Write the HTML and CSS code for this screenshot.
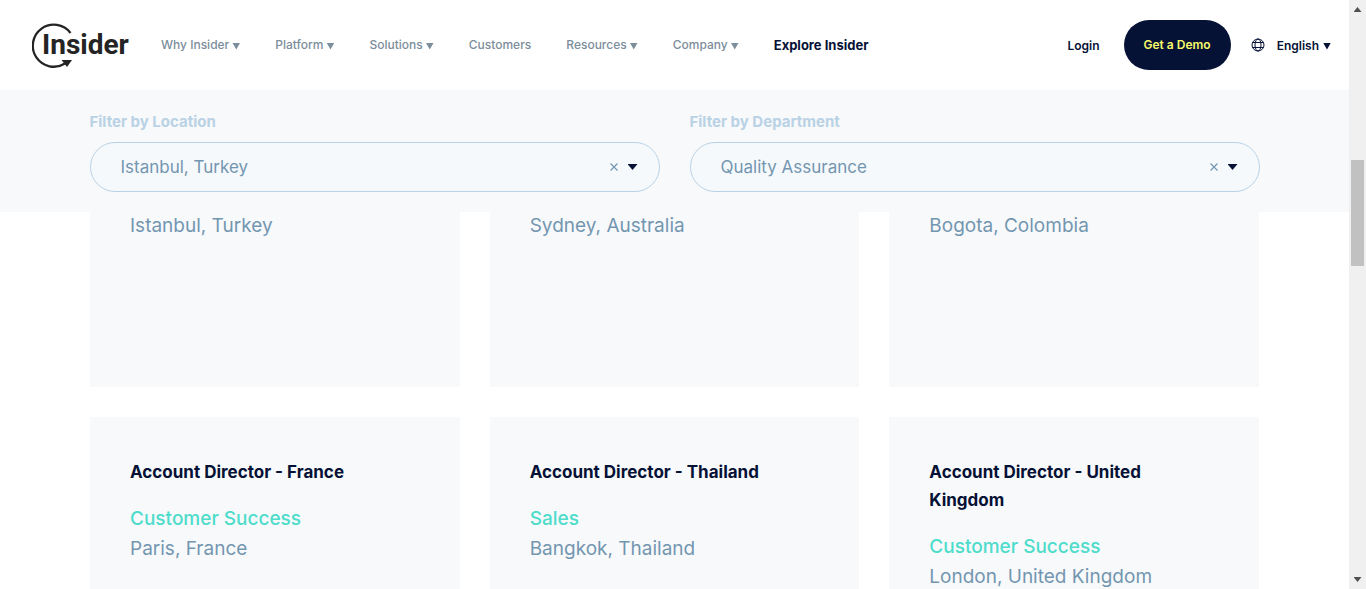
FILE: index.html
```html
<!DOCTYPE html>
<html lang="en">
<head>
<meta charset="utf-8">
<title>Insider - Open Positions</title>
<link rel="stylesheet" href="styles.css">
</head>
<body>
<div class="page">
  <header class="header">
    <a class="logo" href="#" aria-label="Insider home">
      <svg class="logo-mark" viewBox="0 0 100 46" aria-hidden="true">
        <path d="M38.500 11A21 21 0 1 0 33 41.500" fill="none" stroke="#242424" stroke-width="2.300"/>
        <path d="M29.500 38h10.500l-5 7z" fill="#242424"/>
      </svg>
      <span class="logo-text">Insider</span>
    </a>
    <nav class="nav">
      <a class="nav-link" href="#">Why Insider<i class="caret"></i></a>
      <a class="nav-link" href="#">Platform<i class="caret"></i></a>
      <a class="nav-link" href="#">Solutions<i class="caret"></i></a>
      <a class="nav-link" href="#">Customers</a>
      <a class="nav-link" href="#">Resources<i class="caret"></i></a>
      <a class="nav-link" href="#">Company<i class="caret"></i></a>
      <a class="nav-link strong" href="#">Explore Insider</a>
    </nav>
    <div class="actions">
      <a class="login" href="#">Login</a>
      <a class="demo" href="#">Get a Demo</a>
      <a class="language" href="#">
        <svg class="globe" viewBox="0 0 14 14" fill="none" stroke="#051135" aria-hidden="true"><circle cx="7" cy="7" r="6"/><ellipse cx="7" cy="7" rx="3" ry="6"/><path d="M1.500 4.500h11M1.500 9.500h11"/></svg>
        English<i class="caret"></i>
      </a>
    </div>
  </header>
  <section class="filters">
    <div class="container filter-grid">
      <div class="filter">
        <label for="location">Filter by Location</label>
        <div class="field">
          <select id="location"><option>Istanbul, Turkey</option></select>
          <button class="clear" type="button" aria-label="Clear location"><svg viewBox="0 0 8 8"><path d="M.5.5l7 7M7.500.5l-7 7" stroke="#7396b0" stroke-width="1.200"/></svg></button>
          <i class="drop"></i>
        </div>
      </div>
      <div class="filter">
        <label for="department">Filter by Department</label>
        <div class="field">
          <select id="department"><option>Quality Assurance</option></select>
          <button class="clear" type="button" aria-label="Clear department"><svg viewBox="0 0 8 8"><path d="M.5.5l7 7M7.500.5l-7 7" stroke="#7396b0" stroke-width="1.200"/></svg></button>
          <i class="drop"></i>
        </div>
      </div>
    </div>
  </section>
  <main class="container jobs">
    <article class="card partial"><p class="place">Istanbul, Turkey</p></article>
    <article class="card partial"><p class="place">Sydney, Australia</p></article>
    <article class="card partial"><p class="place">Bogota, Colombia</p></article>
    <article class="card"><h2>Account Director - France</h2><p class="team">Customer Success</p><p class="place">Paris, France</p></article>
    <article class="card"><h2>Account Director - Thailand</h2><p class="team">Sales</p><p class="place">Bangkok, Thailand</p></article>
    <article class="card"><h2>Account Director - United Kingdom</h2><p class="team">Customer Success</p><p class="place">London, United Kingdom</p></article>
  </main>
</div>
<div class="scrollbar" aria-hidden="true">
  <i class="step up"></i>
  <div class="track"><div class="thumb"></div></div>
  <i class="step down"></i>
</div>
</body>
</html>
```
FILE: styles.css
```css
* { box-sizing: border-box; }
body { margin: 0; height: 100vh; display: flex; overflow: hidden; background: #fff; color: #051135; font-family: Inter, sans-serif; }
a { color: inherit; text-decoration: none; }
h2, p { margin: 0; }
.page { flex: 1; min-width: 0; overflow: hidden; }
.container { max-width: 1170px; margin: 0 auto; }

.header { height: 90px; padding: 0 18px 0 32px; display: flex; align-items: center; }
.logo { position: relative; width: 98px; height: 46px; margin-right: 31px; }
.logo-mark { position: absolute; inset: 0; width: 100px; height: 46px; }
.logo-text { position: absolute; left: 10px; top: 6px; font: bold 28px/34px Roboto, sans-serif; color: #242424; }
.nav { display: flex; gap: 35px; font-size: 12px; font-weight: 500; color: #7c8d9b; }
.nav-link { display: flex; align-items: center; white-space: nowrap; line-height: 20px; }
.caret { width: 8px; height: 7px; margin: 2px 0 0 3px; background: currentColor; clip-path: polygon(0 0, 100% 0, 50% 100%); }
.strong { color: #051135; font-size: 13px; font-weight: 700; }
.actions { margin-left: auto; display: flex; align-items: center; font-size: 12px; font-weight: 600; white-space: nowrap; }
.login { margin-right: 24px; }
.demo { height: 50px; padding: 0 20px; border-radius: 25px; background: #051135; color: #f8fa6b; line-height: 50px; margin-right: 20px; }
.language { display: flex; align-items: center; }
.language .caret { margin-left: 4px; }
.globe { width: 14px; height: 14px; margin-right: 12px; }

.filters { background: #f8f9fb; padding: 20px 0; }
.filter-grid { display: grid; grid-template-columns: 1fr 1fr; gap: 30px; }
.filter label { display: block; height: 32px; line-height: 24px; font-size: 15px; font-weight: 700; color: #b9d2e5; }
.field { height: 50px; border: 1px solid #b9d2e5; border-radius: 25px; background: #f6f9fc; padding: 0 21px 0 30px; display: flex; align-items: center; }
.field select { flex: 1; min-width: 0; appearance: none; border: 0; padding: 0; background: none; font: 17px/24px Inter, sans-serif; color: #7396b0; }
.clear { border: 0; padding: 0; background: none; width: 8px; height: 8px; margin-right: 10px; display: flex; }
.clear svg { width: 8px; height: 8px; }
.drop { width: 10px; height: 6px; background: #051135; clip-path: polygon(0 0, 100% 0, 50% 100%); }

.jobs { max-width: 1169px; display: grid; grid-template-columns: repeat(3, 1fr); column-gap: 30px; row-gap: 30px; }
.card { background: #f8f9fb; padding: 41px 40px 40px; min-height: 303px; }
.card.partial { padding-top: 0; min-height: 175px; }
.card h2 { font-size: 17px; line-height: 28px; font-weight: 700; margin-bottom: 18px; }
.team { font-size: 19px; line-height: 30px; font-weight: 500; color: #4edccb; }
.place { font-size: 19px; line-height: 30px; color: #7396b0; }
.partial .place { line-height: 28px; }

.scrollbar { width: 17px; background: #f0f0f0; display: flex; flex-direction: column; align-items: center; padding: 7px 0; }
.track { flex: 1; width: 13px; padding-top: 148px; }
.thumb { height: 106px; background: #c1c1c1; }
.step { width: 8px; height: 5px; background: #505050; }
.up { clip-path: polygon(50% 0, 100% 100%, 0 100%); }
.down { clip-path: polygon(0 0, 100% 0, 50% 100%); }
```
